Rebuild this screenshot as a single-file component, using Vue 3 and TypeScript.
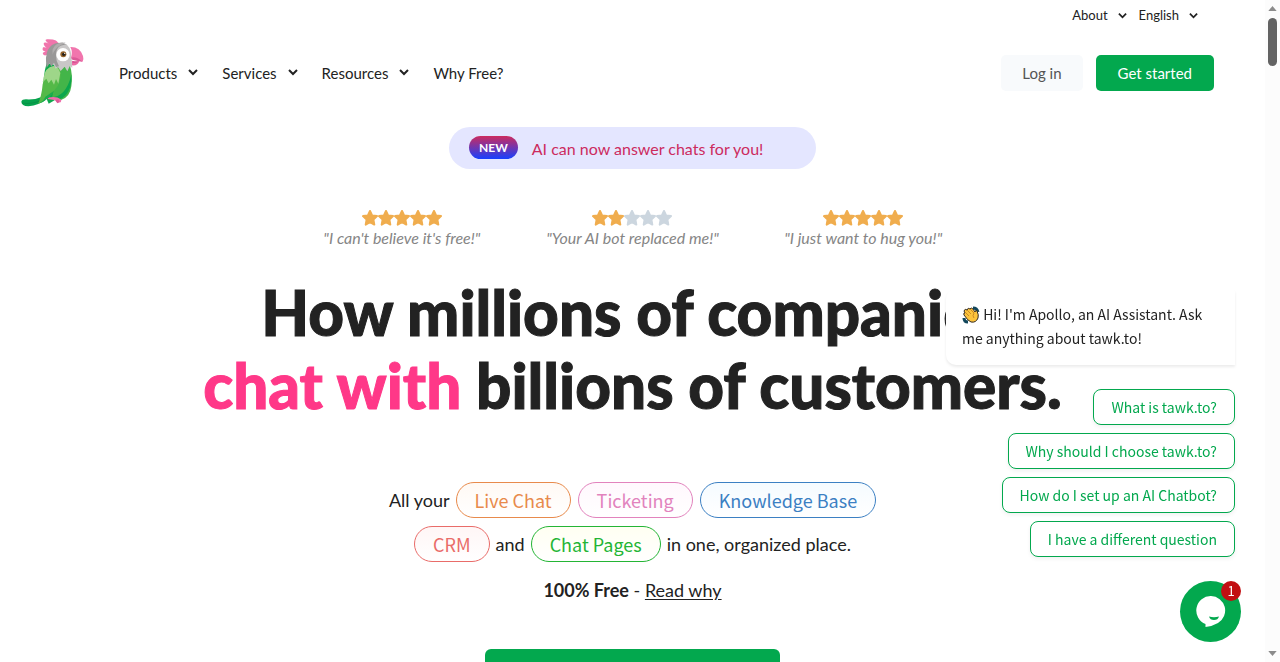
<script setup lang="ts">
interface NavItem { label: string; menu: boolean }
interface Review { quote: string; stars: number }

const navItems: NavItem[] = [
  { label: 'Products', menu: true },
  { label: 'Services', menu: true },
  { label: 'Resources', menu: true },
  { label: 'Why Free?', menu: false },
]
const utilityItems: string[] = ['About', 'English']
const reviews: Review[] = [
  { quote: `"I can't believe it's free!"`, stars: 5 },
  { quote: '"Your AI bot replaced me!"', stars: 2 },
  { quote: '"I just want to hug you!"', stars: 5 },
]
const questions: string[] = [
  'What is tawk.to?',
  'Why should I choose tawk.to?',
  'How do I set up an AI Chatbot?',
  'I have a different question',
]
</script>

<template>
  <div class="shell">
    <div class="page">
      <header>
        <div class="utility">
          <button v-for="item in utilityItems" :key="item" type="button" class="menu-btn small">
            {{ item }}
            <svg class="chev" viewBox="0 0 10 10" aria-hidden="true"><path d="M1 3 5 7 9 3" /></svg>
          </button>
        </div>
        <div class="bar">
          <a href="#" class="logo" aria-label="tawk.to home">
            <svg viewBox="33 26 192 204" aria-hidden="true">
              <path d="M110 98Q98 138 101 184L116 220 144 204 176 113Z" fill="#0ea84d" />
              <path d="M34 214Q36 207 48 207 77 209 101 198L108 208Q88 224 55 228 34 226 34 214Z" fill="#06a34d" />
              <path d="M36 218Q66 223 96 209" fill="none" stroke="#078a42" stroke-width="2" />
              <path d="M143 126 153 110 180 106Q189 133 184 168 180 201 153 209 134 212 126 202Z" fill="#43b549" />
              <path d="M184 133Q187 182 156 204 133 214 121 201 168 201 184 133Z" fill="#0ba64d" />
              <path d="M113 206Q112 200 130 200 144 200 152 207 156 210 152 216L142 217 137 210Z" fill="#ee6eaa" />
              <path d="M135 209 142 219 148 215 145 207Z" fill="#dc5b98" />
              <path d="M110 119Q140 97 151 119 157 157 132 181 123 199 84 221 95 197 98 162Z" fill="#54b948" />
              <path d="M132 181Q119 207 84 221 99 215 106 199Z" fill="#1dad4b" />
              <path d="M101 142Q104 112 131 107 145 109 151 128L145 160 138 146 132 163 124 148 116 159 109 145 98 156Z" fill="#9ed689" />
              <path d="M115 72Q100 80 98 68 102 64 107 64 94 62 99 51 107 50 110 53 98 43 102 37 110 35 116 40 100 28 111 27 146 26 145 43L123 56Z" fill="#f075ac" />
              <path d="M143 40Q149 36 160 37 183 43 185 84L187 112 179 108 172 123 164 109 152 122 144 111 137 115 121 82Z" fill="#c9c7c7" />
              <path d="M170 43Q137 42 138 76 138 92 147 108L138 110 132 97 124 109 119 99 110 112Q99 43 146 37Z" fill="#999898" />
              <path d="M140 42Q124 53 128 73 132 55 154 43 174 36 162 37 151 35 140 42Z" fill="#b0aeae" />
              <path d="M181 50Q210 49 219 77 222 88 218 94L183 82Q189 65 181 50Z" fill="#f175ad" />
              <path d="M183 82Q198 77 218 94 203 92 187 88Z" fill="#dc5a98" />
              <path d="M186 92Q196 97 208 91 204 107 186 105Z" fill="#ed6ba6" />
              <path d="M187 91Q197 94 207 92 201 100 187 97Z" fill="#d85493" />
              <circle cx="159" cy="73" r="20" fill="#fff" />
              <circle cx="160" cy="72" r="9" fill="#94642d" />
              <circle cx="161" cy="72" r="5" fill="#24211d" />
              <circle cx="164" cy="69" r="2" fill="#fff" />
            </svg>
          </a>
          <nav>
            <template v-for="item in navItems" :key="item.label">
              <button v-if="item.menu" type="button" class="menu-btn">
                {{ item.label }}
                <svg class="chev" viewBox="0 0 10 10" aria-hidden="true"><path d="M1 2 5 6 9 2" /></svg>
              </button>
              <a v-else href="#" class="menu-btn">{{ item.label }}</a>
            </template>
          </nav>
          <div class="account">
            <a href="#" class="btn login">Log in</a>
            <a href="#" class="btn start">Get started</a>
          </div>
        </div>
      </header>

      <main>
        <a href="#" class="banner"><span class="new">NEW</span><span>AI can now answer chats for you!</span></a>

        <div class="reviews">
          <figure v-for="review in reviews" :key="review.quote">
            <div class="stars" role="img" :aria-label="`${review.stars} out of 5 stars`">
              <svg v-for="n in 5" :key="n" viewBox="0 0 16 16" :class="{ off: n > review.stars }">
                <path d="M8 1 10.1 5.5 15 6.1 11.4 9.6 12.3 14.6 8 12.2 3.7 14.6 4.6 9.6 1 6.1 5.9 5.5Z" />
              </svg>
            </div>
            <figcaption>{{ review.quote }}</figcaption>
          </figure>
        </div>

        <h1>How millions of companies<br /><em>chat with</em> billions of customers.</h1>

        <div class="features">
          <div class="row">
            <span>All your</span>
            <a href="#" class="tag orange">Live Chat</a>
            <a href="#" class="tag pink">Ticketing</a>
            <a href="#" class="tag blue">Knowledge Base</a>
          </div>
          <div class="row">
            <a href="#" class="tag red">CRM</a>
            <span>and</span>
            <a href="#" class="tag green">Chat Pages</a>
            <span>in one, organized place.</span>
          </div>
        </div>
        <p class="free"><strong>100% Free</strong> - <a href="#">Read why</a></p>
        <button type="button" class="signup" aria-label="Sign up free"></button>
      </main>
    </div>

    <aside class="chat">
      <p class="message">
        <svg class="wave" viewBox="0 0 18 18" aria-hidden="true">
          <path d="M11 2Q15 2 16 6M2 12Q2 16 6 16" fill="none" stroke="#11465b" stroke-width="3" />
          <path d="M2 5Q3 2 5 4 6 1 8 3 9 1 11 3L13 6Q14 3 15 5 17 9 16 12 14 17 9 16 6 15 2 9 1 7 3 7Z" fill="#fcc33b" stroke="#332c24" />
          <path d="M3 6 7 10M5 4 9 8M8 3 12 7Q10 10 12 12" fill="none" stroke="#c98a25" />
        </svg>
        Hi! I'm Apollo, an AI Assistant. Ask me anything about tawk.to!
      </p>
      <button v-for="question in questions" :key="question" type="button" class="question">{{ question }}</button>
      <button type="button" class="bubble" aria-label="Open chat">
        <svg viewBox="0 0 30 32" aria-hidden="true">
          <path d="M15 0A14.5 14.5 0 0 1 22 27Q17 30 9.500 31L9.500 28A14.500 14.500 0 0 1 15 0Z" fill="#fff" />
          <path d="M13 20.500Q18 22 23 20.500 22 24 18 24 14 24 13 20.500Z" fill="#03a84e" />
        </svg>
        <span class="count">1</span>
      </button>
    </aside>

    <div class="scroll" aria-hidden="true">
      <svg viewBox="0 0 10 6"><path d="M5 0 10 6H0Z" /></svg>
      <i></i>
      <svg class="down" viewBox="0 0 10 6"><path d="M0 0H10L5 6Z" /></svg>
    </div>
  </div>
</template>

<style>
body { margin: 0; background: #fff; }
</style>

<style scoped>
.shell {
  --green: #03a84e;
  --source: "Source Sans Pro", "Noto Sans CJK SC", sans-serif;
  display: grid;
  grid-template-columns: minmax(0, 1fr) 15px;
  height: 100vh;
  overflow: hidden;
  font-family: Lato, sans-serif;
  color: #222;
}
.shell *, .shell { box-sizing: border-box; }
button { font: inherit; color: inherit; border: 0; background: none; padding: 0; cursor: pointer; }
a { color: inherit; text-decoration: none; }
svg { display: block; flex: none; }
.page { overflow: hidden; }
.utility { display: flex; justify-content: flex-end; gap: 12px; height: 30px; padding-right: 67px; }
.menu-btn { display: flex; align-items: center; gap: 11px; font-size: 15px; line-height: 24px; }
.menu-btn.small { gap: 10px; font-size: 13px; line-height: 30px; }
.chev { width: 10px; height: 10px; fill: none; stroke: #222; stroke-width: 2; }
.small .chev { width: 9px; height: 9px; }
.bar { display: flex; align-items: center; padding: 9px 51px 0 21px; }
.logo svg { width: 64px; height: 68px; }
nav { display: flex; gap: 24px; margin-left: 34px; }
.account { display: flex; gap: 13px; margin-left: auto; }
.btn { padding: 0 21px; border-radius: 5px; font-size: 15px; line-height: 36px; }
.login { background: #f8fafc; color: #545454; }
.start { padding: 0 22px; background: var(--green); color: #fff; }
main { display: flex; flex-direction: column; align-items: center; }
.banner {
  display: flex; align-items: center; gap: 14px; width: 367px; height: 42px; margin-top: 20px;
  padding-left: 20px; border-radius: 21px; background: #e4e6ff; color: #cc2b5e; font-size: 16px;
}
.new {
  padding: 0 10px; margin-bottom: 2px; border-radius: 12px; background: linear-gradient(#cc2b5e, #1740ff);
  color: #fff; font-size: 12px; font-weight: 700; line-height: 23px;
}
.reviews { display: grid; grid-template-columns: repeat(3, 1fr); width: 692px; margin-top: 41px; }
figure { margin: 0; text-align: center; white-space: nowrap; }
.stars { display: flex; justify-content: center; }
.stars svg { width: 16px; height: 16px; fill: #f0ad4e; stroke: #f0ad4e; stroke-width: 2; stroke-linejoin: round; }
.stars svg.off { fill: #ccd6df; stroke: #ccd6df; }
figcaption { color: #858585; font-size: 16px; line-height: 24px; font-style: italic; }
h1 {
  margin: 26px 0 0; font-size: 62px; line-height: 73px;
  font-weight: 900; text-align: center; white-space: nowrap; -webkit-text-stroke: 1px currentColor;
}
h1 em { color: #ff3888; font-style: normal; }
.features { display: grid; gap: 8px; margin-top: 60px; font-size: 18px; }
.row { display: flex; justify-content: center; align-items: center; gap: 6px; white-space: nowrap; }
.tag { padding: 0 18px; border: 1px solid currentColor; border-radius: 18px; font: 18px/34px var(--source); }
.tag + .tag { margin-left: 1px; }
.orange { color: #e88a4b; background: linear-gradient(#fff9f4, #fff); }
.pink { color: #e283bd; background: linear-gradient(#fff8fd, #fff); }
.blue { color: #3c80c3; background: linear-gradient(#f5fbff, #fff); }
.red { color: #e96c69; background: linear-gradient(#fff6f6, #fff); }
.green { color: #24b535; background: linear-gradient(#fffff2, #fff); }
.free { margin: 16px 0 0; font-size: 18px; line-height: 24px; }
.free a { text-decoration: underline; text-underline-offset: 2px; }
.signup { flex: none; width: 295px; height: 52px; margin-top: 47px; border-radius: 6px; background: var(--green); }
.chat {
  position: fixed; right: 45px; bottom: 20px; width: 289px; display: flex; flex-direction: column;
  align-items: flex-end; gap: 8px; font: 14px/24px var(--source);
}
.message {
  width: 100%; margin: 0 0 16px; padding: 13px 16px 15px; border-radius: 10px 4px 0 10px; background: #fff;
  color: #222; box-shadow: 0 2px 3px #00000014;
}
.wave { display: inline-block; width: 18px; height: 18px; vertical-align: -4px; }
.question {
  padding: 0 17px; border: 1px solid var(--green); border-radius: 8px; background: #fff; color: var(--green);
  line-height: 34px; box-shadow: 0 2px 4px #0000000f;
}
.bubble {
  position: relative; display: grid; place-items: center; width: 61px; height: 61px; margin: 16px -6px 0 0;
  border-radius: 50%; background: var(--green);
}
.bubble svg { width: 30px; height: 32px; }
.count {
  position: absolute; top: 0; right: 0; width: 20px; height: 20px; border-radius: 50%; background: #c20f12;
  color: #fff; font: 13px/20px var(--source);
}
.scroll { display: flex; flex-direction: column; align-items: center; padding: 6px 0; background: #fcfcfc; }
.scroll svg { width: 9px; height: 5px; fill: #8b8b8b; }
.scroll i { width: 9px; height: 48px; margin-top: 7px; border-radius: 5px; background: #636363; }
.scroll .down { margin-top: auto; }
</style>
